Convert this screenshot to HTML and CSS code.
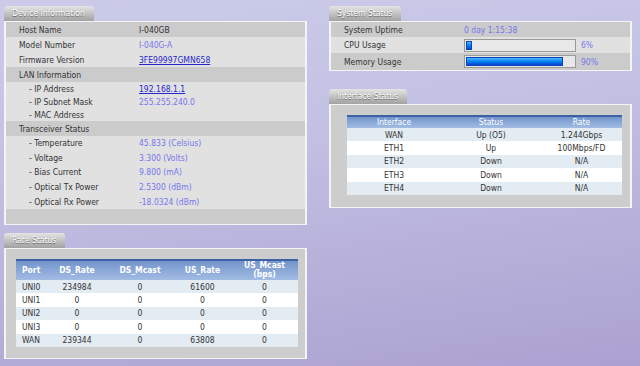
FILE: index.html
```html
<!DOCTYPE html>
<html lang="en">
<head>
    <meta charset="UTF-8">
    <meta name="viewport" content="width=device-width, initial-scale=1.0">
    <title>Device Status</title>
    <link rel="stylesheet" href="styles.css">
</head>
<body>
    <div class="page">
        <div class="column left">
            <div class="panel">
                <div class="tab">Device Information</div>
                <div class="box">
                    <table class="info">
                        <tr class="dark main"><td class="label">Host Name</td><td class="plain">I-040GB</td></tr>
                        <tr class="light main"><td class="label">Model Number</td><td class="value">I-040G-A</td></tr>
                        <tr class="light main"><td class="label">Firmware Version</td><td><a href="#">3FE99997GMN658</a></td></tr>
                        <tr class="dark main"><td class="label" colspan="2">LAN Information</td></tr>
                        <tr class="light sub"><td class="label">- IP Address</td><td><a href="#">192.168.1.1</a></td></tr>
                        <tr class="light sub"><td class="label">- IP Subnet Mask</td><td class="value">255.255.240.0</td></tr>
                        <tr class="light sub"><td class="label">- MAC Address</td><td class="value"></td></tr>
                        <tr class="dark main"><td class="label" colspan="2">Transceiver Status</td></tr>
                        <tr class="light tx"><td class="label">- Temperature</td><td class="value">45.833 (Celsius)</td></tr>
                        <tr class="light tx"><td class="label">- Voltage</td><td class="value">3.300 (Volts)</td></tr>
                        <tr class="light tx"><td class="label">- Bias Current</td><td class="value">9.800 (mA)</td></tr>
                        <tr class="light tx"><td class="label">- Optical Tx Power</td><td class="value">2.5300 (dBm)</td></tr>
                        <tr class="light tx"><td class="label">- Optical Rx Power</td><td class="value">-18.0324 (dBm)</td></tr>
                        <tr class="dark main"><td colspan="2"></td></tr>
                    </table>
                </div>
            </div>

            <div class="panel">
                <div class="tab">Rate Status</div>
                <div class="box">
                    <table class="grid rate">
                        <tr>
                            <th class="port">Port</th>
                            <th>DS_Rate</th>
                            <th>DS_Mcast</th>
                            <th>US_Rate</th>
                            <th>US_Mcast<br>(bps)</th>
                        </tr>
                        <tr><td class="port">UNI0</td><td>234984</td><td>0</td><td>61600</td><td>0</td></tr>
                        <tr><td class="port">UNI1</td><td>0</td><td>0</td><td>0</td><td>0</td></tr>
                        <tr><td class="port">UNI2</td><td>0</td><td>0</td><td>0</td><td>0</td></tr>
                        <tr><td class="port">UNI3</td><td>0</td><td>0</td><td>0</td><td>0</td></tr>
                        <tr><td class="port">WAN</td><td>239344</td><td>0</td><td>63808</td><td>0</td></tr>
                    </table>
                </div>
            </div>
        </div>

        <div class="column right">
            <div class="panel">
                <div class="tab">System Status</div>
                <div class="box">
                    <table class="info system">
                        <tr class="dark r1"><td class="label">System Uptime</td><td class="value">0 day 1:15:38</td></tr>
                        <tr class="light r2">
                            <td class="label">CPU Usage</td>
                            <td><div class="usage"><div class="bar"><div class="fill" style="width: 6%"></div></div><span class="value">6%</span></div></td>
                        </tr>
                        <tr class="dark r3">
                            <td class="label">Memory Usage</td>
                            <td><div class="usage"><div class="bar"><div class="fill" style="width: 90%"></div></div><span class="value">90%</span></div></td>
                        </tr>
                    </table>
                </div>
            </div>

            <div class="panel">
                <div class="tab">Interface Status</div>
                <div class="box">
                    <table class="grid iface">
                        <tr><th>Interface</th><th>Status</th><th>Rate</th></tr>
                        <tr><td>WAN</td><td>Up (O5)</td><td>1.244Gbps</td></tr>
                        <tr><td>ETH1</td><td>Up</td><td>100Mbps/FD</td></tr>
                        <tr><td>ETH2</td><td>Down</td><td>N/A</td></tr>
                        <tr><td>ETH3</td><td>Down</td><td>N/A</td></tr>
                        <tr><td>ETH4</td><td>Down</td><td>N/A</td></tr>
                    </table>
                </div>
            </div>
        </div>
    </div>
</body>
</html>
```

FILE: styles.css
```css
* {
    box-sizing: border-box;
}
html {
    min-height: 100%;
    background: linear-gradient(172deg, #cbcbe9 0%, #c4c2e4 35%, #aba1d1 100%);
}
body {
    margin: 0;
    padding: 6px 4px;
    font-family: "DejaVu Sans Condensed", "DejaVu Sans", sans-serif;
    font-size: 8.5px;
    color: #333;
}
.page {
    display: flex;
    gap: 22px;
}
.column {
    width: 303px;
    display: flex;
    flex-direction: column;
}
.left .panel + .panel {
    margin-top: 8px;
}
.right .panel + .panel {
    margin-top: 18px;
}
.panel {
    display: flex;
    flex-direction: column;
}
.tab {
    align-self: flex-start;
    height: 15px;
    line-height: 15px;
    padding: 0 9px 0 8px;
    color: #fff;
    background: linear-gradient(#e4e4e4, #a2a2a2);
    border-radius: 3px 3px 0 0;
    text-shadow: 0 1px 1px #5f5f5f;
}
.box {
    background: #cdcdcd;
    border: solid #f4f4f4;
    border-width: 1px 2px;
}

/* label / value tables */
.info {
    width: 100%;
    border-collapse: collapse;
}
.info td {
    padding: 0;
    white-space: nowrap;
}
.info .label {
    width: 133px;
    padding-left: 13px;
}
.info .sub .label,
.info .tx .label {
    padding-left: 23px;
}
.info .main td {
    height: 15px;
}
.info .sub td {
    height: 13px;
}
.info .tx td {
    height: 14.6px;
}
.dark td {
    background: #cbcbcb;
}
.light td {
    background: #e1e1e1;
}
.value {
    color: #7676ec;
}
.info a {
    color: #2626cc;
}
.system .r1 td {
    height: 15px;
}
.system .r2 td {
    height: 16px;
}
.system .r3 td {
    height: 17px;
}
.usage {
    display: flex;
    align-items: center;
    gap: 5px;
}
.bar {
    width: 112px;
    height: 13px;
    padding: 1px;
    border: 1px solid #9a9a9a;
    background: #e8e8e8;
}
.fill {
    height: 100%;
    border: 1px solid #0d45b8;
    background: linear-gradient(#49b8ff, #0a86f2 45%, #0046d2);
}

/* data grids */
.grid {
    border-collapse: collapse;
    border-top: 2px solid #3d62a3;
    table-layout: fixed;
}
.grid th {
    padding: 0;
    color: #fff;
    font-weight: normal;
    background: linear-gradient(#7394cb, #a2bce3);
}
.grid td {
    padding: 0;
    height: 13.4px;
    text-align: center;
}
.grid tr:nth-child(even) td {
    background: #e3ebf3;
}
.grid tr:nth-child(odd) td {
    background: #fff;
}
.iface {
    width: 275px;
    margin: 10px 8px 12px 16px;
}
.iface th {
    height: 11px;
    line-height: 11px;
}
.iface th:nth-child(1) {
    width: 94px;
}
.iface th:nth-child(2) {
    width: 100px;
}
.rate {
    width: 282px;
    margin: 10px 7px 11px 10px;
}
.rate th {
    height: 20px;
    line-height: 9px;
    font-weight: bold;
}
.rate .port {
    width: 32px;
    text-align: left;
    padding-left: 6px;
}
.rate th:nth-child(2) {
    width: 58px;
}
.rate th:nth-child(3) {
    width: 68px;
}
.rate th:nth-child(4) {
    width: 57px;
}
```
